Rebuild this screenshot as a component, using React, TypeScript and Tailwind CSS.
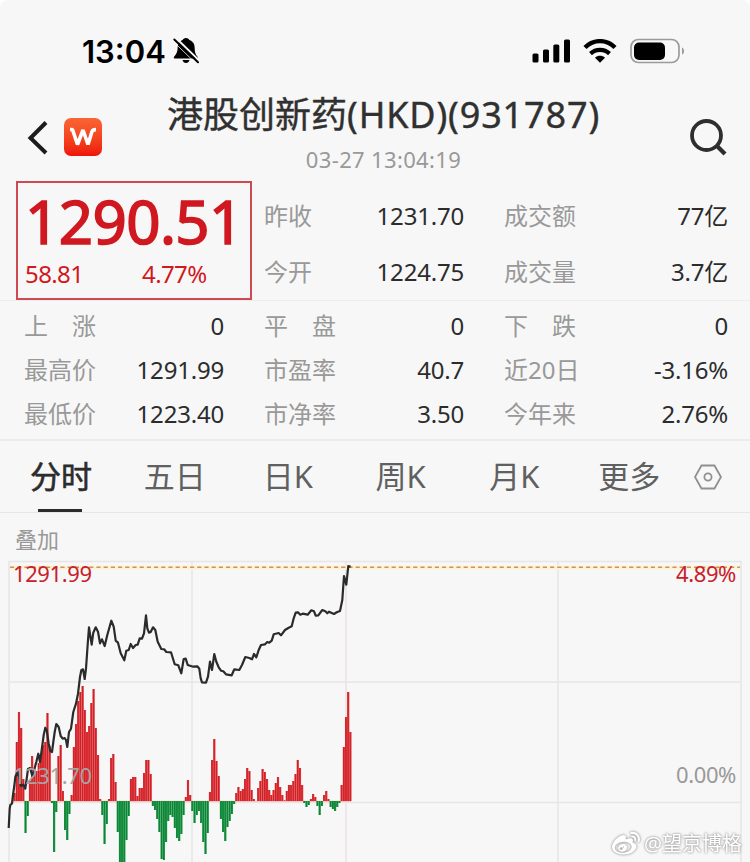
import { FaWeibo } from 'react-icons/fa'

type Quote = { label: string; value: string }

const topQuotes: Quote[] = [
  { label: '昨收', value: '1231.70' },
  { label: '成交额', value: '77亿' },
  { label: '今开', value: '1224.75' },
  { label: '成交量', value: '3.7亿' },
]

const quotes: Quote[] = [
  { label: '上　涨', value: '0' },
  { label: '平　盘', value: '0' },
  { label: '下　跌', value: '0' },
  { label: '最高价', value: '1291.99' },
  { label: '市盈率', value: '40.7' },
  { label: '近20日', value: '-3.16%' },
  { label: '最低价', value: '1223.40' },
  { label: '市净率', value: '3.50' },
  { label: '今年来', value: '2.76%' },
]

const tabs = [
  { name: '五日', className: 'w-[119px]' },
  { name: '日K', className: 'w-[113px]' },
  { name: '周K', className: 'w-[114px]' },
  { name: '月K', className: 'w-[109px]' },
  { name: '更多', className: 'w-[96px]' },
]

// 量能柱：正数为红，负数为绿
const bars = [
  8, 59, 89, 73, 22, -32, -15, 20, 45, 27, 30, 38, 45, 56, 59, 88, 55, -2, -51, -11, 45, 56, 10, -29, -39, -13, 6,
  54, 77, 100, 109, 115, 91, 69, 75, 98, 112, 73, 46, 2, -14, -43, -23, 2, 43, 47, 19, -31, -62, -62, -62, -39,
  -15, 22, 24, 24, 5, 13, 13, 28, 41, 41, 27, -5, -9, -18, -31, -58, -59, -41, -20, -14, -16, -27, -37, -40, -33,
  -14, 4, 21, 6, -10, -22, -14, -10, -22, -41, -53, -32, 9, 41, 62, 40, 25, -18, -31, -40, -26, -20, -13, -3, 8,
  14, 10, 12, 22, 33, 30, 11, 2, 0, 13, 20, 32, 29, 22, 11, 6, 11, 18, 24, 14, 6, 0.5, 10, 16, 16, 20, 27, 41, 33,
  16, -2, -6, -4, 2, 7, 4, -5, -14, -5, 6, 10, 2, -6, -8, -10, -6, -2, 16, 54, 84, 109, 69,
]

const pricePoints =
  '8.7,828 9.7,808.7 10.3,805 12,803.5 13,795 14.3,786 15.3,777 17.3,772 19.3,777 21,786 23.3,784.7 25.3,788.7 ' +
  '26.7,778.7 28,769 30,768 31.7,773.7 32.7,777 34.7,768 36.3,762 38.3,753.7 40,762 41.7,750 43.7,735 45.3,727.7 ' +
  '46.7,730 48.7,743.7 50.3,751 52,752 53.3,742 54.7,732 56.3,724 58.7,727 60.7,736 62.7,738.7 64.7,738 66,740 ' +
  '67.3,747 69,732 71,728.7 73.3,712 76,703.7 78,693.7 80,677 81.3,670.3 83,669.3 84.7,679 86,668.7 87.3,650 ' +
  '88,640 89,627.3 90.3,636 91.7,644.7 93.3,632.7 95.7,627.3 98,631.7 100,643.3 102,639.3 104.7,646 107.3,635 ' +
  '111.3,620.7 113.7,626.7 115.7,640.7 118,642.7 120.7,653.3 124.3,660.3 126.3,650.7 128.7,650 130.7,644 133,648 ' +
  '135.7,645 137.7,644.7 139.7,638.3 142,638.7 144,633.3 146,615.3 147.3,628.3 149,632.7 150.7,632 153,627.3 ' +
  '155.3,630 157.7,641.7 161.3,649 164.3,649.3 166.3,652 171,652.3 174.7,664.3 178.3,665.3 181.3,673.3 183.7,659 ' +
  '185.7,658.7 187.7,665 190,665.7 193.3,666.7 197.3,666.3 199.3,668.7 200.7,678.3 202,682.3 206,682.7 208,676.7 ' +
  '210,661.7 212,670 214.3,654 216.3,661.7 218.7,667.3 221,670.7 223.3,671.3 226,674.3 231.7,675.3 234.3,669.3 ' +
  '239.3,670 242,665 245.3,657 249.3,658 252,659.3 254,654 256.3,657.3 258.7,650 261,645 265,644.3 267.3,642 ' +
  '269.3,642.7 271.7,640.7 273.7,634.3 278.7,633 281,635.3 285,630 288.7,627.7 291.7,626.3 293.7,618.3 295.7,612.7 ' +
  '298,612.3 300.3,614.7 302.7,613.7 307.7,614.7 311.3,610.3 314,611.3 315.7,615.7 318.3,615.3 322.3,610 ' +
  '325.3,611.3 327.3,613.3 329,611.7 334,614 336.7,612.3 340,611 342.3,600 344,576 346.3,584.7 348.3,566 350.7,566.7'

function StatusBar() {
  return (
    <div className="flex h-[88px] items-center justify-between pt-[14px] pr-[65px] pl-[82px] text-black">
      <div className="flex items-center gap-[6px]">
        <span className="font-['Inter'] text-[31px] leading-none font-semibold">13:04</span>
        <svg className="h-[28px] w-[28px]" viewBox="0 0 28 28">
          <path
            d="M14 1c1.900 0 3 1 3.300 2.100 3.900 1.300 5.400 4.300 5.400 8.100 0 4.600 1.300 6.500 2.800 8.600.5.8.1 1.700-.8 1.700H3c-1.200 0-1.500-1-.9-1.800 1.500-2 3.300-3.600 3.500-8.500.1-3.800 1.500-6.800 5.100-8.100C11 2 12.100 1 14 1z"
            fill="currentColor"
          />
          <path d="M10.500 23h7c-.4 2-1.800 3-3.500 3s-3.100-1-3.500-3z" fill="currentColor" />
          <path d="M3.700.800L27.500 23.800" stroke="#f7f7f7" strokeWidth="2" />
          <path d="M2.300 2.500L26 25.300" stroke="currentColor" strokeWidth="2" strokeLinecap="round" />
          <path d="M1.300 4.500L23.500 26" stroke="#f7f7f7" strokeWidth="0.800" />
        </svg>
      </div>
      <div className="flex items-center">
        <svg className="h-[24px] w-[39px]" viewBox="0 0 39 24" fill="currentColor">
          <rect x="0.500" y="14.500" width="6" height="9" rx="1.500" />
          <rect x="11" y="10.500" width="6" height="13" rx="1.500" />
          <rect x="21.300" y="5.500" width="6" height="18" rx="1.500" />
          <rect x="32" y="0.500" width="6" height="23" rx="1.500" />
        </svg>
        <svg className="ml-[12px] h-[24px] w-[34px]" viewBox="0 0 34 24" fill="none" stroke="currentColor">
          <path d="M2 8.500C10.500 0 23.500 0 32 8.500" strokeWidth="4.400" />
          <path d="M7.500 14.600c5.300-5 13.700-5 19 0" strokeWidth="4.200" />
          <path d="M17 23.800l-5-5c2.800-2.600 7.200-2.600 10 0z" fill="currentColor" stroke="none" />
        </svg>
        <svg className="ml-[13px] h-[26px] w-[55px]" viewBox="0 0 55 26">
          <rect x="1" y="1.500" width="48" height="23" rx="7.500" fill="none" stroke="#9b9b9b" strokeWidth="1.700" />
          <rect x="4" y="4.500" width="31" height="17.500" rx="5" fill="#000" />
          <path d="M52 9.500c2.800 1 2.800 6 0 7z" fill="#9b9b9b" />
        </svg>
      </div>
    </div>
  )
}

function Header() {
  return (
    <div className="flex h-[92px] items-start justify-between pr-[23px] pl-[26px]">
      <div className="flex w-[94px] items-center gap-[16px] pt-[30px]">
        <svg className="h-[36px] w-[22px]" viewBox="0 0 22 36" fill="none" stroke="#1c1c1c" strokeWidth="4">
          <path d="M20 3.500L4.500 19 20 34" />
        </svg>
        <div className="flex h-[38px] w-[38px] items-center justify-center rounded-[7px] bg-gradient-to-b from-[#fa6433] to-[#ee1208]">
          <svg className="h-[20px] w-[28px]" viewBox="0 0 28 20" fill="none" stroke="#fff" strokeWidth="3.600">
            <path d="M1 2.500h2.500L8.500 17.500 14 3l5 14.500 4-13q.7-1.900 4-1.900" strokeLinejoin="bevel" />
          </svg>
        </div>
      </div>
      <div className="flex flex-col items-center pt-px">
        <h1 className="text-[36px] leading-[52px] whitespace-nowrap text-[#303030] [-webkit-text-stroke:0.4px_#303030]">
          港股创新药<span className="tracking-[0.85px]">(HKD)(931787)</span>
        </h1>
        <p className="mt-[3px] text-[22px] leading-[30px] tracking-[0.35px] text-[#999]">03-27 13:04:19</p>
      </div>
      <div className="flex w-[80px] justify-end pt-[30px]">
        <svg className="h-[38px] w-[38px]" viewBox="0 0 38 38" fill="none" stroke="#2e2e2e">
          <circle cx="17.500" cy="17.500" r="14.500" strokeWidth="3.800" />
          <path d="M27.500 27.500L36 36" strokeWidth="4.200" />
        </svg>
      </div>
    </div>
  )
}

function QuoteCell({ label, value }: Quote) {
  return (
    <div className="flex items-center justify-between text-[24px] leading-none whitespace-nowrap">
      <span className="text-[#999]">{label}</span>
      <span className="tracking-[-0.2px] text-[#2c2c2c]">{value}</span>
    </div>
  )
}

function Summary() {
  return (
    <div className="flex h-[121px] border-b border-[#ededed] pl-[16px]">
      <div className="mt-[1px] h-[119px] w-[236px] border-2 border-[#cf4a50] pl-[7px] text-[#d01820]">
        <div className="h-[76px] text-[60px] leading-[77px] tracking-[-0.6px] [-webkit-text-stroke:1.600px_#d01820]">
          1290.51
        </div>
        <div className="flex text-[24px] leading-[30px] tracking-[-0.6px]">
          <span className="w-[117px]">58.81</span>
          <span>4.77%</span>
        </div>
      </div>
      <div className="ml-[12px] grid h-[120px] grid-cols-[200px_224px] grid-rows-2 gap-x-[40px] pt-[8px]">
        {topQuotes.map((q) => (
          <QuoteCell key={q.label} {...q} />
        ))}
      </div>
    </div>
  )
}

function Tabs() {
  return (
    <div className="flex h-[72px] items-stretch border-b border-[#e6e6e6] pr-[28px] pl-[30px] text-[31px] leading-[46px]">
      <div className="flex w-[114px] flex-col justify-between text-[#2c2c2c] [-webkit-text-stroke:0.6px_#2c2c2c]">
        <span className="pt-[12px]">分时</span>
        <span className="ml-[8px] h-[3px] w-[44px] bg-[#2c2c2c]" />
      </div>
      {tabs.map((tab) => (
        <div key={tab.name} className={`pt-[12px] text-[#606060] ${tab.className}`}>
          {tab.name}
        </div>
      ))}
      <svg className="mt-[22px] h-[28px] w-[28px]" viewBox="0 0 28 28" fill="none" stroke="#909090" strokeWidth="1.800">
        <path d="M7.500 2.500h13L27 14l-6.500 11.500h-13L1 14z" />
        <circle cx="14" cy="14" r="3.600" />
      </svg>
    </div>
  )
}

function Chart() {
  return (
    <svg className="block h-[306px] w-[750px]" viewBox="0 556 750 306">
      <g stroke="#e6e6e6" strokeWidth="1.500">
        <path d="M9 561.500H741M9 682H741M9 802.500H741" />
        <path d="M9 561V862M192 561V862M558 561V862M741 561V862" />
        <path d="M346 561V862" stroke="#ebe0e2" />
      </g>
      <path d="M10 567.500H740" stroke="#fdf3d6" strokeWidth="4" />
      <path d="M10 567.300H740" stroke="#cf9455" strokeWidth="1.400" strokeDasharray="4.200 3" />

      <path d="M12 801.300H351" stroke="#f6b9b6" strokeWidth="1" />
      {bars.map((h, i) => (
        <g key={i}>
          {/* 浅色底让相邻柱子连成一片 */}
          <rect
            x={13.51 + i * 2.195}
            y={h > 0 ? 801 - h : 801}
            width="2.195"
            height={Math.abs(h)}
            fill={h > 0 ? '#e23d40' : '#23a04c'}
          />
          <rect
            x={13.81 + i * 2.195}
            y={h > 0 ? 801 - h : 801}
            width="1.300"
            height={Math.abs(h)}
            fill={h > 0 ? '#cf2228' : '#0f8237'}
          />
        </g>
      ))}

      <polyline points={pricePoints} fill="none" stroke="#2b2b2b" strokeWidth="2.200" strokeLinejoin="round" />

      <g fontSize="22" letterSpacing="-0.400">
        <text x="13" y="582" fill="#c8202a">
          1291.99
        </text>
        <text x="736" y="582" fill="#c8202a" textAnchor="end">
          4.89%
        </text>
        <text x="13" y="784" fill="#aaa2a2">
          1231.70
        </text>
        <text x="736" y="783" fill="#999" textAnchor="end">
          0.00%
        </text>
      </g>
    </svg>
  )
}

export default function App() {
  return (
    <div className="h-[862px] w-[750px] overflow-hidden bg-white font-['Noto_Sans','Noto_Sans_CJK_SC',sans-serif]">
      <div className="relative h-full overflow-hidden rounded-t-[8px] bg-[#f7f7f7]">
        <StatusBar />
        <Header />
        <Summary />
        <div className="grid h-[140px] grid-cols-[200px_200px_224px] grid-rows-3 gap-x-[40px] border-b-2 border-[#ebebeb] pt-[3px] pb-[3px] pl-[24px]">
          {quotes.map((q) => (
            <QuoteCell key={q.label} {...q} />
          ))}
        </div>
        <Tabs />
        <div className="h-[43px] pt-[9px] pl-[15px] text-[22px] leading-[34px] text-[#999]">叠加</div>
        <Chart />
        <div className="absolute right-[8px] bottom-[4px] flex items-center gap-[4px] text-white [filter:drop-shadow(0_0_1px_#999)_drop-shadow(0_0_1px_#ccc)]">
          <FaWeibo className="h-[28px] w-[28px]" />
          <span className="text-[20px] leading-[28px]">@望京博格</span>
        </div>
      </div>
    </div>
  )
}
